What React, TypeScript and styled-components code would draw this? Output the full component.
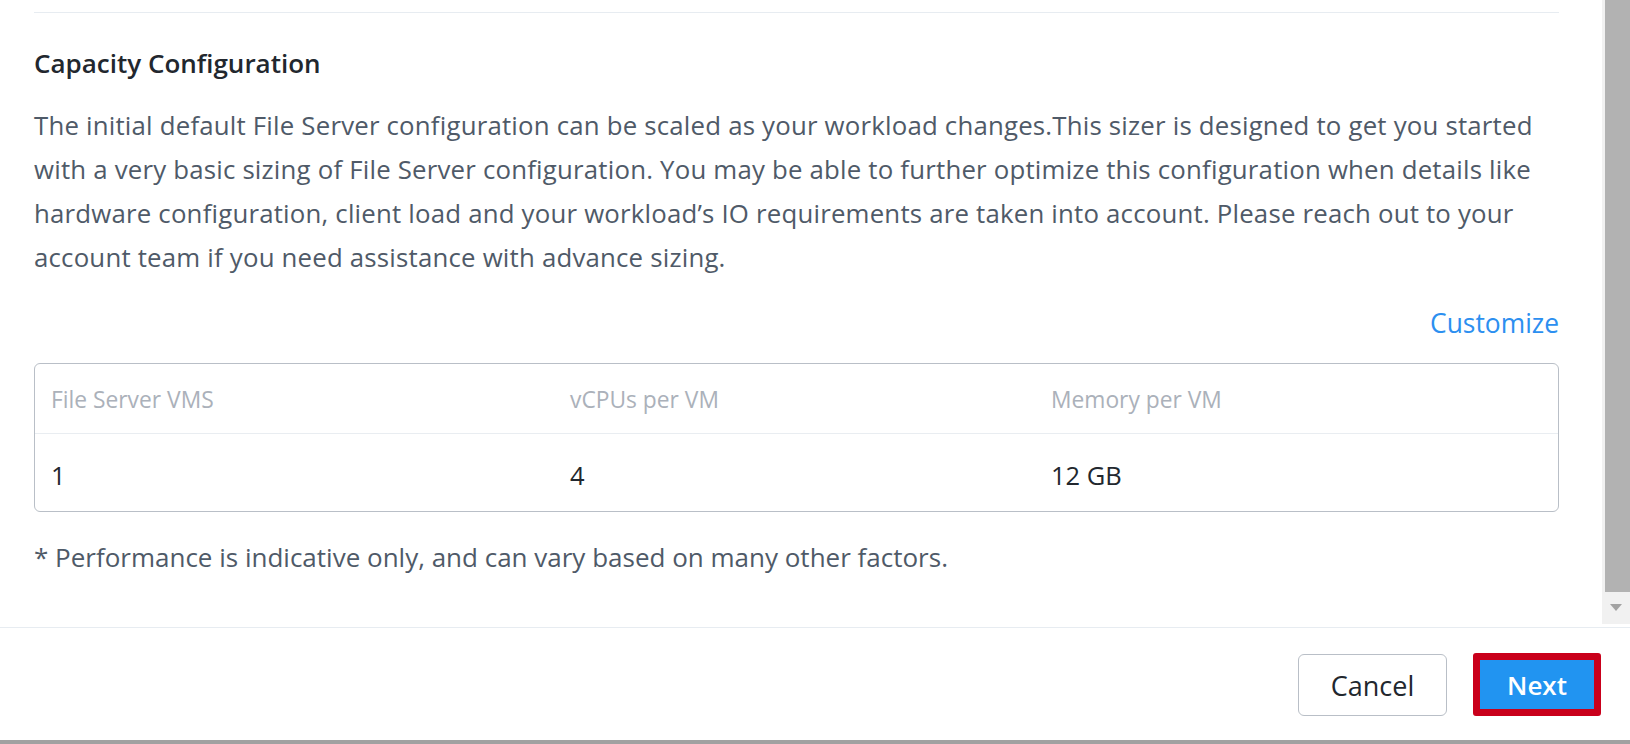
import React from 'react'
import styled, { createGlobalStyle } from 'styled-components'

const GlobalStyle = createGlobalStyle`
  html, body {
    margin: 0;
    padding: 0;
    background: #ffffff;
  }
  body {
    font-family: 'Open Sans', Lato, Arial, sans-serif;
    -webkit-font-smoothing: antialiased;
  }
`

const Modal = styled.div`
  width: 1630px;
  height: 744px;
  display: flex;
  flex-direction: column;
  background: #ffffff;
  overflow: hidden;
`

const BodyRow = styled.div`
  display: flex;
  height: 627px;
  flex-shrink: 0;
`

const Content = styled.div`
  flex: 1;
  padding: 12px 43px 0 34px;
`

const TopRule = styled.div`
  height: 1px;
  background: #e7ecf1;
`

const Heading = styled.h3`
  margin: 36px 0 0 0;
  font-size: 26px;
  line-height: 28px;
  font-weight: 600;
  color: #22272e;
`

const Description = styled.p`
  margin: 26px 0 0 0;
  font-size: 25.8px;
  line-height: 44px;
  letter-spacing: 0.2px;
  color: #4f5a68;
`

const LinkRow = styled.div`
  display: flex;
  justify-content: flex-end;
  margin-top: 28px;
`

const TextLink = styled.a`
  font-size: 26.4px;
  line-height: 32px;
  color: #2c8ff0;
  text-decoration: none;
  cursor: pointer;
`

const Table = styled.div`
  margin-top: 24px;
  border: 1px solid #b9bfc7;
  border-radius: 6px;
  overflow: hidden;
`

const TableRow = styled.div<{ $head?: boolean }>`
  display: grid;
  grid-template-columns: 519px 481px 1fr;
  height: ${({ $head }) => ($head ? '69px' : '77px')};
  align-items: center;
  padding-left: 16px;
  border-bottom: ${({ $head }) => ($head ? '1px solid #e9edf1' : 'none')};
`

const Cell = styled.div<{ $head?: boolean }>`
  font-size: ${({ $head }) => ($head ? '22.8px' : '25.5px')};
  color: ${({ $head }) => ($head ? '#abb1ba' : '#22272e')};
  padding-top: ${({ $head }) => ($head ? '2px' : '4px')};
`

const Footnote = styled.div`
  margin-top: 29px;
  font-size: 26px;
  line-height: 32px;
  color: #4f5a68;
`

const ScrollTrack = styled.div`
  width: 28px;
  height: 624px;
  background: #f1f1f1;
  display: flex;
  flex-direction: column;
  align-items: flex-end;
`

const ScrollThumb = styled.div`
  width: 25px;
  height: 592px;
  background: #b2b2b2;
`

const ScrollArrow = styled.div`
  align-self: center;
  margin-top: 12px;
  width: 0;
  height: 0;
  border-left: 6px solid transparent;
  border-right: 6px solid transparent;
  border-top: 7px solid #a3a3a3;
`

const Footer = styled.div`
  flex: 1;
  border-top: 1px solid #e7ecf1;
  display: flex;
  justify-content: flex-end;
  align-items: flex-start;
  gap: 26px;
  padding: 25px 29px 0 0;
`

const Button = styled.button<{ $primary?: boolean }>`
  height: ${({ $primary }) => ($primary ? '63px' : '62px')};
  margin-top: ${({ $primary }) => ($primary ? '0' : '1px')};
  padding: 0;
  width: ${({ $primary }) => ($primary ? '128px' : '149px')};
  font-family: 'Open Sans', Lato, Arial, sans-serif;
  font-size: ${({ $primary }) => ($primary ? '26px' : '27px')};
  font-weight: ${({ $primary }) => ($primary ? 600 : 400)};
  color: ${({ $primary }) => ($primary ? '#ffffff' : '#22272e')};
  background: ${({ $primary }) => ($primary ? '#2194f1' : '#ffffff')};
  border: ${({ $primary }) => ($primary ? '7px solid #c9001b' : '1px solid #b9bfc7')};
  border-radius: ${({ $primary }) => ($primary ? '3px' : '6px')};
  cursor: pointer;
`

const BottomBar = styled.div`
  height: 4px;
  background: #a1a1a1;
  flex-shrink: 0;
`

const columns = ['File Server VMS', 'vCPUs per VM', 'Memory per VM']
const values = ['1', '4', '12 GB']

export default function App() {
  return (
    <>
      <GlobalStyle />
      <Modal>
        <BodyRow>
          <Content>
            <TopRule />
            <Heading>Capacity Configuration</Heading>
            <Description>
              The initial default File Server configuration can be scaled as your workload changes.This sizer is
              designed to get you started with a very basic sizing of File Server configuration. You may be able to
              further optimize this configuration when details like hardware configuration, client load and your
              workload’s IO requirements are taken into account. Please reach out to your account team if you need
              assistance with advance sizing.
            </Description>
            <LinkRow>
              <TextLink>Customize</TextLink>
            </LinkRow>
            <Table>
              <TableRow $head>
                {columns.map(c => (
                  <Cell $head key={c}>{c}</Cell>
                ))}
              </TableRow>
              <TableRow>
                {values.map(v => (
                  <Cell key={v}>{v}</Cell>
                ))}
              </TableRow>
            </Table>
            <Footnote>* Performance is indicative only, and can vary based on many other factors.</Footnote>
          </Content>
          <ScrollTrack>
            <ScrollThumb />
            <ScrollArrow />
          </ScrollTrack>
        </BodyRow>
        <Footer>
          <Button>Cancel</Button>
          <Button $primary>Next</Button>
        </Footer>
        <BottomBar />
      </Modal>
    </>
  )
}
